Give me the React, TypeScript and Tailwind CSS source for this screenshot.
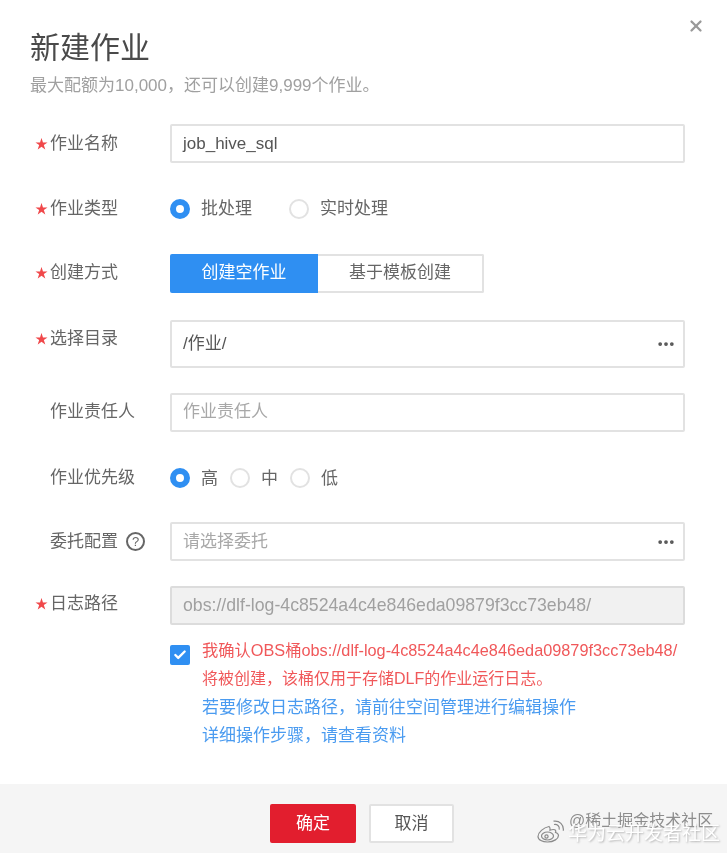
import { X, Ellipsis, Check } from 'lucide-react';
import type { ReactNode } from 'react';

const FONT = '"Liberation Sans", "Noto Sans CJK SC", sans-serif';

function Label({ text, required, children }: { text: string; required?: boolean; children?: ReactNode }) {
  return (
    <div className="flex w-[170px] shrink-0 items-center pl-[35px] text-[17px] leading-[24px] text-[#666]">
      <span className="w-[15px] text-[13px] text-[#f0484a]">{required ? '★' : ''}</span>
      <span>{text}</span>
      {children}
    </div>
  );
}

function Field({ value, muted, more, height = 'h-[39px]' }: { value: string; muted?: boolean; more?: boolean; height?: string }) {
  return (
    <div className={`${height} flex w-[515px] items-center justify-between rounded-[2px] border-2 border-[#e2e2e2] bg-white pl-[11px] pr-[7px] text-[17px] ${muted ? 'text-[#a8a8a8]' : 'text-[#555]'}`}>
      <span>{value}</span>
      {more && <Ellipsis size={20} strokeWidth={2.5} className="text-[#555]" />}
    </div>
  );
}

function Radio({ on, text }: { on?: boolean; text: string }) {
  return (
    <div className="flex items-center">
      <span className={`box-border h-[20px] w-[20px] rounded-full ${on ? 'border-[6px] border-[#2f8ff2] bg-white' : 'border-2 border-[#e2e2e2] bg-white'}`} />
      <span className="ml-[11px] text-[17px] text-[#666]">{text}</span>
    </div>
  );
}

function WeiboMark() {
  return (
    <svg viewBox="0 0 28 23" className="absolute left-[537px] top-[36px] h-[23px] w-[28px]" fill="none" stroke="#8a8a8a" strokeWidth="1.2">
      <path d="M12 6.5C6.5 7.5 1 12.5 1 16.5c0 3.5 4.5 5.5 9.5 5.5 6.5 0 11-3.5 11-6.5 0-2-2-2.7-3-3 .6-1.6.3-3-2.2-3-1.2 0-2.5.4-3.3.7.3-1.9-.2-3.2-1-3.7z" />
      <ellipse cx="10.5" cy="16" rx="6" ry="4" />
      <circle cx="9.5" cy="16.5" r="1.6" />
      <path d="M17 4.5c3-.7 6 1.6 5.2 5.2" />
      <path d="M16.5 1.2c6-1 10.5 3.5 9.8 9.5" />
    </svg>
  );
}

export default function App() {
  return (
    <div className="relative flex h-[853px] w-[727px] flex-col bg-white blur-[0.4px]" style={{ fontFamily: FONT }}>
      <X size={18} strokeWidth={3} className="absolute right-[22px] top-[17px] text-[#999]" />

      <div className="flex-1">
        <h1 className="pl-[30px] pt-[28px] text-[30px] leading-[40px] text-[#4a4a4a]">新建作业</h1>
        <p className="pl-[30px] pt-[7px] text-[17px] leading-[22px] text-[#a0a0a0]">最大配额为10,000，还可以创建9,999个作业。</p>

        <div className="mt-[27px] flex items-start">
          <div className="pt-[8px]"><Label text="作业名称" required /></div>
          <Field value="job_hive_sql" />
        </div>

        <div className="mt-[33px] flex items-center">
          <Label text="作业类型" required />
          <div className="flex items-center gap-[37px]">
            <Radio on text="批处理" />
            <Radio text="实时处理" />
          </div>
        </div>

        <div className="mt-[32px] flex items-center">
          <Label text="创建方式" required />
          <div className="flex h-[39px] w-[314px] text-[17px]">
            <div className="flex w-[148px] items-center justify-center rounded-l-[2px] bg-[#2f8ff2] text-white">创建空作业</div>
            <div className="flex flex-1 items-center justify-center rounded-r-[2px] border-2 border-l-0 border-[#e2e2e2] bg-white text-[#666]">基于模板创建</div>
          </div>
        </div>

        <div className="mt-[27px] flex items-start">
          <div className="pt-[7px]"><Label text="选择目录" required /></div>
          <Field value="/作业/" more height="h-[48px]" />
        </div>

        <div className="mt-[25px] flex items-center">
          <Label text="作业责任人" />
          <Field value="作业责任人" muted />
        </div>

        <div className="mt-[34px] flex items-center">
          <Label text="作业优先级" />
          <div className="flex items-center gap-[12px]">
            <Radio on text="高" />
            <Radio text="中" />
            <Radio text="低" />
          </div>
        </div>

        <div className="mt-[31px] flex items-center">
          <Label text="委托配置">
            <span className="ml-[8px] flex h-[19px] w-[19px] items-center justify-center rounded-full border-2 border-[#666] text-[13px] leading-none text-[#666]">?</span>
          </Label>
          <Field value="请选择委托" muted more />
        </div>

        <div className="mt-[25px] flex items-start">
          <div className="pt-[6px]"><Label text="日志路径" required /></div>
          <div className="flex h-[39px] w-[515px] items-center rounded-[2px] border-2 border-[#dcdcdc] bg-[#f1f1f1] pl-[11px] text-[17.7px] text-[#a0a0a0]">
            obs://dlf-log-4c8524a4c4e846eda09879f3cc73eb48/
          </div>
        </div>

        <div className="mt-[20px] flex items-start pl-[170px]">
          <span className="flex h-[20px] w-[20px] shrink-0 items-center justify-center rounded-[2px] bg-[#2f8ff2]">
            <Check size={14} strokeWidth={4} className="text-white" />
          </span>
          <div className="-mt-[9px] ml-[12px] text-[17px] leading-[28.8px]">
            <p className="whitespace-nowrap text-[16.3px] text-[#f0585a]">我确认OBS桶obs://dlf-log-4c8524a4c4e846eda09879f3cc73eb48/</p>
            <p className="text-[16px] text-[#f0585a]">将被创建，该桶仅用于存储DLF的作业运行日志。</p>
            <p className="text-[#4a9bf0]">若要修改日志路径，请前往空间管理进行编辑操作</p>
            <p className="text-[#4a9bf0]">详细操作步骤，请查看资料</p>
          </div>
        </div>
      </div>

      <div className="relative flex h-[69px] justify-center gap-[13px] bg-[#f5f5f5] pr-[3px] pt-[20px]">
        <button className="h-[39px] w-[86px] rounded-[2px] bg-[#e21e2e] text-[17px] text-white">确定</button>
        <button className="h-[39px] w-[85px] rounded-[2px] border-2 border-[#e2e2e2] bg-white text-[17px] text-[#555]">取消</button>
        <WeiboMark />
        <div className="absolute left-[569px] top-[27px] text-[16px] leading-[20px] text-[#8d8d8d]">@稀土掘金技术社区</div>
        <div className="absolute left-[568px] top-[38px] text-[19px] leading-[24px] text-white [text-shadow:1px_1px_2px_#b5b5b5]">华为云开发者社区</div>
      </div>
    </div>
  );
}
